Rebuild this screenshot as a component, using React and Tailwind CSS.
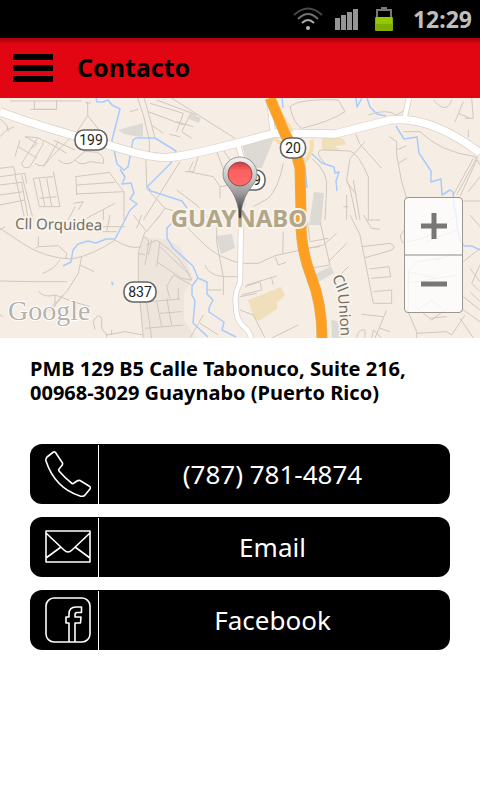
const minorA = [
  'M30 18H245M103 18V43H170V15M90 43H170M263 20V62L232 108M263 62L300 108M258 20L263 28L273 20',
  'M0 72L20 90L25 110M0 125L20 105L43 95M75 125L112 145L95 160M60 135L45 185M112 130L65 205Q70 225 90 215L125 155Q140 135 112 128L75 125',
  'M55 155L112 190M105 205Q130 225 150 190L215 125M175 140L130 215M160 135L225 165M130 135L175 160L200 175',
  'M175 195Q205 220 230 190L260 165M225 195Q240 215 270 200L310 205Q315 180 290 172L250 168',
  'M0 220L40 215L48 240M0 245L75 235L80 265M0 270L65 262L85 375M0 300L70 290M0 330L75 315M45 240L75 375M65 240L100 375',
  'M100 250L160 245M100 250L118 335M118 250L135 335M140 250L155 335M160 230L180 335M118 310L170 305M118 335H180',
  'M225 245L330 232M228 248L230 300M230 270L345 262M230 297L370 290M330 235L350 262L372 290V375M220 325L250 320L235 345M205 375L225 335M250 375L345 325M310 345V375',
  'M410 0L430 60L448 135V190M430 0L455 90L465 130M450 25L550 55M470 15L590 60M445 50L550 90M500 0L705 130M550 55L530 110M530 80L580 95M570 60L545 110L575 130M508 118L540 125M455 90L490 115M390 50L415 43',
  'M540 200L430 375M438 195L440 275M580 200L565 230L640 245L660 275V310M555 230H580L600 170M650 170L690 275M670 165L710 225M660 275L690 270M530 285L590 330L630 375M440 280L495 340L470 375M495 340L530 350',
];
const minorB = [
  'M150 35Q180 10 295 15L315 50Q270 80 185 100Q160 85 150 35M385 60Q440 40 470 60L495 45M255 205Q220 170 245 165L330 168Q355 175 385 245V375M348 118L358 145L425 220M375 140L330 190L320 255L330 280L350 375',
  'M448 125L470 140V180L485 260L500 310M470 165L500 152M475 205L500 190M490 110H540Q600 170 705 185L720 210M580 15Q620 60 635 15M670 20L645 80M695 10L700 70H675M655 55L690 70M685 105V128',
  'M215 190Q265 230 260 280L255 375M130 205Q115 280 85 310L40 335M320 260L350 300M310 335H325M320 375V300M340 255L360 375M715 180L650 300M700 190L640 300M710 195L660 305M670 318H720M685 290L720 245',
];
const minorC = [
  'M0 40L75 90Q140 130 215 132Q280 120 345 75M115 65V95L175 92L200 115L198 130M105 100L115 95M345 75Q390 105 425 95M330 0L320 50M300 35H375M290 50H350M400 0L440 50L480 0M410 40L425 0M0 45L15 35',
  'M128 175Q160 165 180 135M245 125L235 175L200 230L170 260L110 320M240 150L282 170M0 198L100 200H200M115 228Q130 250 165 240L220 260L270 275M165 240V275M190 240L150 290M285 345L280 320Q295 290 305 310V340L320 360L375 350L430 360M0 300L10 305M320 355V369M335 345V360',
  'M435 50L415 110V200L430 369M415 115L435 120M430 65Q450 70 445 90L435 150M455 75L445 120M480 80L470 155M440 90L470 75Q550 130 575 195L545 190L470 140M480 95L570 180M575 210L520 180L500 215L510 250M430 262L540 252M440 265L455 369M470 260L485 335M500 250L515 330M535 220V255M435 340L550 330M480 295L545 290',
  'M560 35Q620 100 655 120L690 135L720 145M650 0V80L670 185V240M615 150Q625 180 670 185H715M620 225H665M570 369L610 300M600 325L655 360',
];
const minorD = [
  'M10 145H55L105 122L250 90L290 55M130 50L128 115M105 125L115 150L138 142M20 210L110 183M5 240L65 225L60 200L15 215M95 190L100 210M0 245L50 235M0 285L40 300L75 369M95 369L175 330',
  'M200 0L210 80L265 70M200 100L240 95M240 20L270 150L210 160M265 140L320 85M290 190L325 155M330 0L360 60L400 265H455V225L400 230M365 95L450 85Q480 100 440 110L375 128M388 162L447 155L452 185L393 190M380 15L420 15M370 0L395 40L420 43',
  'M365 298L430 305M440 285L405 369M420 340L450 350M350 369Q355 340 375 345V369M395 369L400 345L425 369M500 280L530 350V369M530 355L620 350L635 360L675 300M570 310L620 305M660 310L700 369M490 85Q470 60 495 45',
  'M505 290V170L530 140L600 130M500 205L650 180M505 170L590 190M590 135L640 115M500 80Q560 75 600 40L650 0M560 80L650 45M520 270L575 315L620 280M540 280L575 255L605 280M690 0L720 35M670 140L720 100M690 160L720 200M720 150L695 205L720 230M670 245L720 285M690 230L720 260M670 285L720 320',
];

const avenue = 'M0 14Q50 32 112 48Q155 62 173 59Q190 57 238 45L275 35L335 36L390 22Q430 17 480 55';
const sideRoads = 'M404 22L409 0M238 46L243 65L241 120L240 185Q234 196 236 208Q236 222 243 228Q250 234 251 240M269 0L273 36';
const highway = 'M270 0L285 36L296 55L300 70L301 117Q300 150 311 178Q322 205 322 240';

function Streets({ paths }) {
  return paths.map((d) => (
    <path key={d} d={d} fill="none" stroke="#d0c7bd" strokeWidth="3" />
  ));
}

function Shield({ x, y, label, width = 32 }) {
  return (
    <g>
      <rect x={x - width / 2} y={y - 10} width={width} height="20" rx="9" fill="#fff" stroke="#666" strokeWidth="1.6" />
      <text x={x} y={y + 5} textAnchor="middle" fontSize="14" fill="#222" className="font-[Roboto,sans-serif]">
        {label}
      </text>
    </g>
  );
}

function Map() {
  return (
    <svg viewBox="0 0 480 240" preserveAspectRatio="xMidYMid slice" className="block h-60 w-full" role="img" aria-label="Mapa de Guaynabo">
      <defs>
        <linearGradient id="pin" x1="0" y1="0" x2="0" y2="1">
          <stop offset="0" stopColor="#f4f4f4" />
          <stop offset="0.35" stopColor="#c4c4c4" />
          <stop offset="0.6" stopColor="#9a9a9a" />
          <stop offset="1" stopColor="#222" />
        </linearGradient>
        <linearGradient id="dot" x1="0" y1="0" x2="0" y2="1">
          <stop offset="0" stopColor="#c94040" />
          <stop offset="0.35" stopColor="#fb6060" />
          <stop offset="1" stopColor="#ff6b6b" />
        </linearGradient>
      </defs>
      <rect width="480" height="240" fill="#f6eee5" />
      <path d="M143 139L165 141L180 148L193 180L184 196L184 222L196 240H144L139 205L138 160Z" fill="#eee6dd" />
      <path
        d="M118 32L143 25V39L134 38L124 36ZM190 15L201 20L199 25L189 21ZM242 46L274 40L262 70L248 70ZM216 138L232 136L235 150L221 156ZM314 94L324 95L321 127H309ZM312 178L331 168L334 175L315 186ZM331 222L343 224V240H332Z"
        fill="#dddad6"
      />
      <path d="M322 39L342 40L346 45L345 47L335 48L340 52H322ZM248 202L281 189L285 197L277 205V211L259 223L254 220Z" fill="#efdfbb" />
      <g transform="translate(0 -3) scale(.33333)"><Streets paths={minorA} /></g>
      <g transform="translate(240 -3) scale(.33333)"><Streets paths={minorB} /></g>
      <g transform="translate(0 117) scale(.33333)"><Streets paths={minorC} /></g>
      <g transform="translate(240 117) scale(.33333)"><Streets paths={minorD} /></g>
      <g fill="none" stroke="#a9cbfb" strokeWidth="1.5" strokeLinejoin="round">
        <path d="M96 0L97 4L103 4L108 2L112 7L120 11L112 42L117 66L124 72L128 69L133 42L136 40H155L176 53L171 65L147 89L151 93L182 103L187 110M120 71L125 79L122 86L131 85L134 95L130 101L137 106L130 112L125 122L115 141L106 141L96 145L88 143L78 146L73 152L71 164L63 168" />
        <path d="M180 117L167 130V140L173 150L193 168L198 180L192 188L192 197L195 203L193 225L208 239M198 180L207 184V196L213 202L209 210V214L224 224L222 232L236 239" />
        <path d="M356 0L357 9L362 0M367 0L370 9L377 16L386 18M396 28L404 41L417 39L419 55L431 73V84L434 83L441 81L442 97L450 92L453 94L454 108L457 120V130L461 145L465 148L472 148L480 152M282 0L283 10M310 54L322 65L334 69L335 75L339 74L336 83L337 93M304 60L307 90" />
      </g>
      <path d="M111 183L114 185L112 188Z" fill="#a9cbfb" />
      <g fill="none" strokeLinejoin="round">
        <path d={avenue} stroke="#d9d1c7" strokeWidth="9" />
        <path d={sideRoads} stroke="#d9d1c7" strokeWidth="6" />
        <path d={avenue} stroke="#fff" strokeWidth="7.500" />
        <path d={sideRoads} stroke="#fff" strokeWidth="4.500" />
        <path d="M274 4L292 34M274 40L284 48M311 42Q315 54 303 65" stroke="#f6dda9" strokeWidth="4" />
        <path d={highway} stroke="#e6ad52" strokeWidth="11" />
        <path d={highway} stroke="#ff9f22" strokeWidth="9" />
      </g>
      <Shield x={91} y={42} label="199" />
      <Shield x={293} y={50} label="20" width={25} />
      <Shield x={140} y={194} label="837" />
      <Shield x={249} y={82} label="199" />
      <g stroke="#f8f3ed" strokeWidth="4" strokeLinejoin="round" paintOrder="stroke" className="font-['Noto_Sans',sans-serif]">
        <text x="15" y="131" fontSize="15" fill="#77705f" transform="rotate(1 15 131)">Cll Orquidea</text>
        <text fontSize="15" fill="#77705f" transform="translate(332 179) rotate(68)">Cll</text>
        <text fontSize="15" fill="#77705f" transform="translate(338 196) rotate(86)">Union</text>
        <text x="239" y="129" textAnchor="middle" fontSize="24" fontWeight="700" fill="#b3a587">GUAYNABO</text>
      </g>
      <text x="8" y="222" fontSize="28" fill="#b5b1ad" stroke="#fff" strokeWidth="2" paintOrder="stroke" className="font-['Liberation_Serif',serif]">Google</text>
      <path
        d="M240 59A17 17 0 0 1 257 76C257 87 248 88 243 105Q241 111 241 120H239Q239 111 237 105C232 88 223 87 223 76A17 17 0 0 1 240 59Z"
        fill="url(#pin)"
        stroke="#777"
        strokeWidth="0.7"
      />
      <circle cx="240" cy="76" r="12" fill="url(#dot)" stroke="#8d3a3a" strokeWidth="0.8" />
    </svg>
  );
}

function ContactButton({ icon, children }) {
  return (
    <button type="button" className="flex h-15 w-full items-stretch overflow-hidden rounded-xl bg-black text-white">
      <span className="flex w-17 shrink-0 items-center justify-end pr-[7px]">{icon}</span>
      <span className="mt-px w-px shrink-0 bg-white" />
      <span className="flex grow items-center justify-center pr-1 text-[26px]">{children}</span>
    </button>
  );
}

const iconProps = {
  width: 46,
  height: 46,
  viewBox: '0 0 46 46',
  fill: 'none',
  stroke: '#fff',
  strokeWidth: 1.6,
  strokeLinejoin: 'round',
  'aria-hidden': true,
};

export default function App() {
  return (
    <div className="min-h-screen bg-white font-['Noto_Sans','Open_Sans',sans-serif] text-black">
      <div className="flex h-[38px] items-center justify-end bg-black pr-2">
        <svg width="30" height="24" viewBox="0 0 30 24" fill="none" aria-hidden="true" className="mr-3">
          <path d="M1 8Q15 -5 29 8" stroke="#484848" strokeWidth="2" />
          <path d="M5 12Q15 2 25 12" stroke="#707070" strokeWidth="2" />
          <path d="M9 16Q15 10 21 16" stroke="#aaa" strokeWidth="2" />
          <circle cx="15" cy="21" r="2" fill="#bbb" />
        </svg>
        <svg width="24" height="22" viewBox="0 0 24 22" fill="#959595" aria-hidden="true" className="mr-4">
          <path d="M0 10H5V22H0ZM6 7H11V22H6ZM12 4H17V22H12ZM18 1H23V22H18Z" />
        </svg>
        <svg width="18" height="24" viewBox="0 0 18 24" aria-hidden="true" className="mr-5">
          <path d="M2 10V3H16V10" fill="none" stroke="#777" strokeWidth="2" />
          <path d="M6 0H12V3H6Z" fill="#777" />
          <rect y="10" width="18" height="14" rx="1" fill="#80ad00" />
          <rect x="1" y="10" width="16" height="7" fill="#91c800" />
        </svg>
        <span className="text-[23px] font-bold text-[#bebebe]">12:29</span>
      </div>
      <header className="flex h-15 items-center bg-linear-to-b from-[#a0000b] to-[#e20613] to-10% pl-[13px]">
        <button type="button" aria-label="Menú" className="flex w-10 flex-col gap-[5px]">
          <span className="h-[6px] bg-black" />
          <span className="h-[6px] bg-black" />
          <span className="h-[6px] bg-black" />
        </button>
        <h1 className="ml-6 text-[25px] font-bold">Contacto</h1>
      </header>
      <div className="relative">
        <Map />
        <div className="absolute right-[17px] bottom-[25px] flex h-[116px] w-[59px] flex-col divide-y-2 divide-[#c4c2bf] rounded-sm border border-[#999693] bg-white/75">
          <button type="button" aria-label="Acercar" className="flex flex-1 items-center justify-center">
            <svg width="26" height="26" viewBox="0 0 26 26" fill="#777" aria-hidden="true"><path d="M10.500 0H15.500V10.500H26V15.500H15.500V26H10.500V15.500H0V10.500H10.500Z" /></svg>
          </button>
          <button type="button" aria-label="Alejar" className="flex flex-1 items-center justify-center">
            <svg width="26" height="26" viewBox="0 0 26 26" fill="#777" aria-hidden="true"><path d="M0 10.500H26V15.500H0Z" /></svg>
          </button>
        </div>
      </div>
      <main className="px-[30px] pt-[19px]">
        <p className="text-xl leading-6 font-bold">
          PMB 129 B5 Calle Tabonuco, Suite 216,
          <br />
          00968-3029 Guaynabo (Puerto Rico)
        </p>
        <div className="mt-[39px] flex flex-col gap-[13px]">
          <ContactButton
            icon={
              <svg {...iconProps}>
                <path d="M8.500 1Q9.500 0.500 10.500 1.500L17.500 12Q18 13.500 16.500 15L14 18Q13.500 19 14 20Q20 27 27 32.500Q28 33 29 32L32 30Q33.500 29 35 29.500L44 35Q46 36 45 38L40 44Q38.500 46 35 45Q10 37 1 10Q0.500 8 2 6Z" />
              </svg>
            }
          >
            (787) 781-4874
          </ContactButton>
          <ContactButton
            icon={
              <svg {...iconProps}>
                <path d="M1 7H45V38H1ZM1 9L19 26Q23 30 27 26L45 9M1 34L16 23M45 34L30 23" />
              </svg>
            }
          >
            Email
          </ContactButton>
          <ContactButton
            icon={
              <svg {...iconProps}>
                <rect x="1" y="1" width="44" height="44" rx="8" />
                <path d="M24 45V26H21V20H24V17Q24 10 31 10H36.500V15.500H32Q30 15.500 30 18V20H36L35.500 26H30V45" />
              </svg>
            }
          >
            Facebook
          </ContactButton>
        </div>
      </main>
    </div>
  );
}
